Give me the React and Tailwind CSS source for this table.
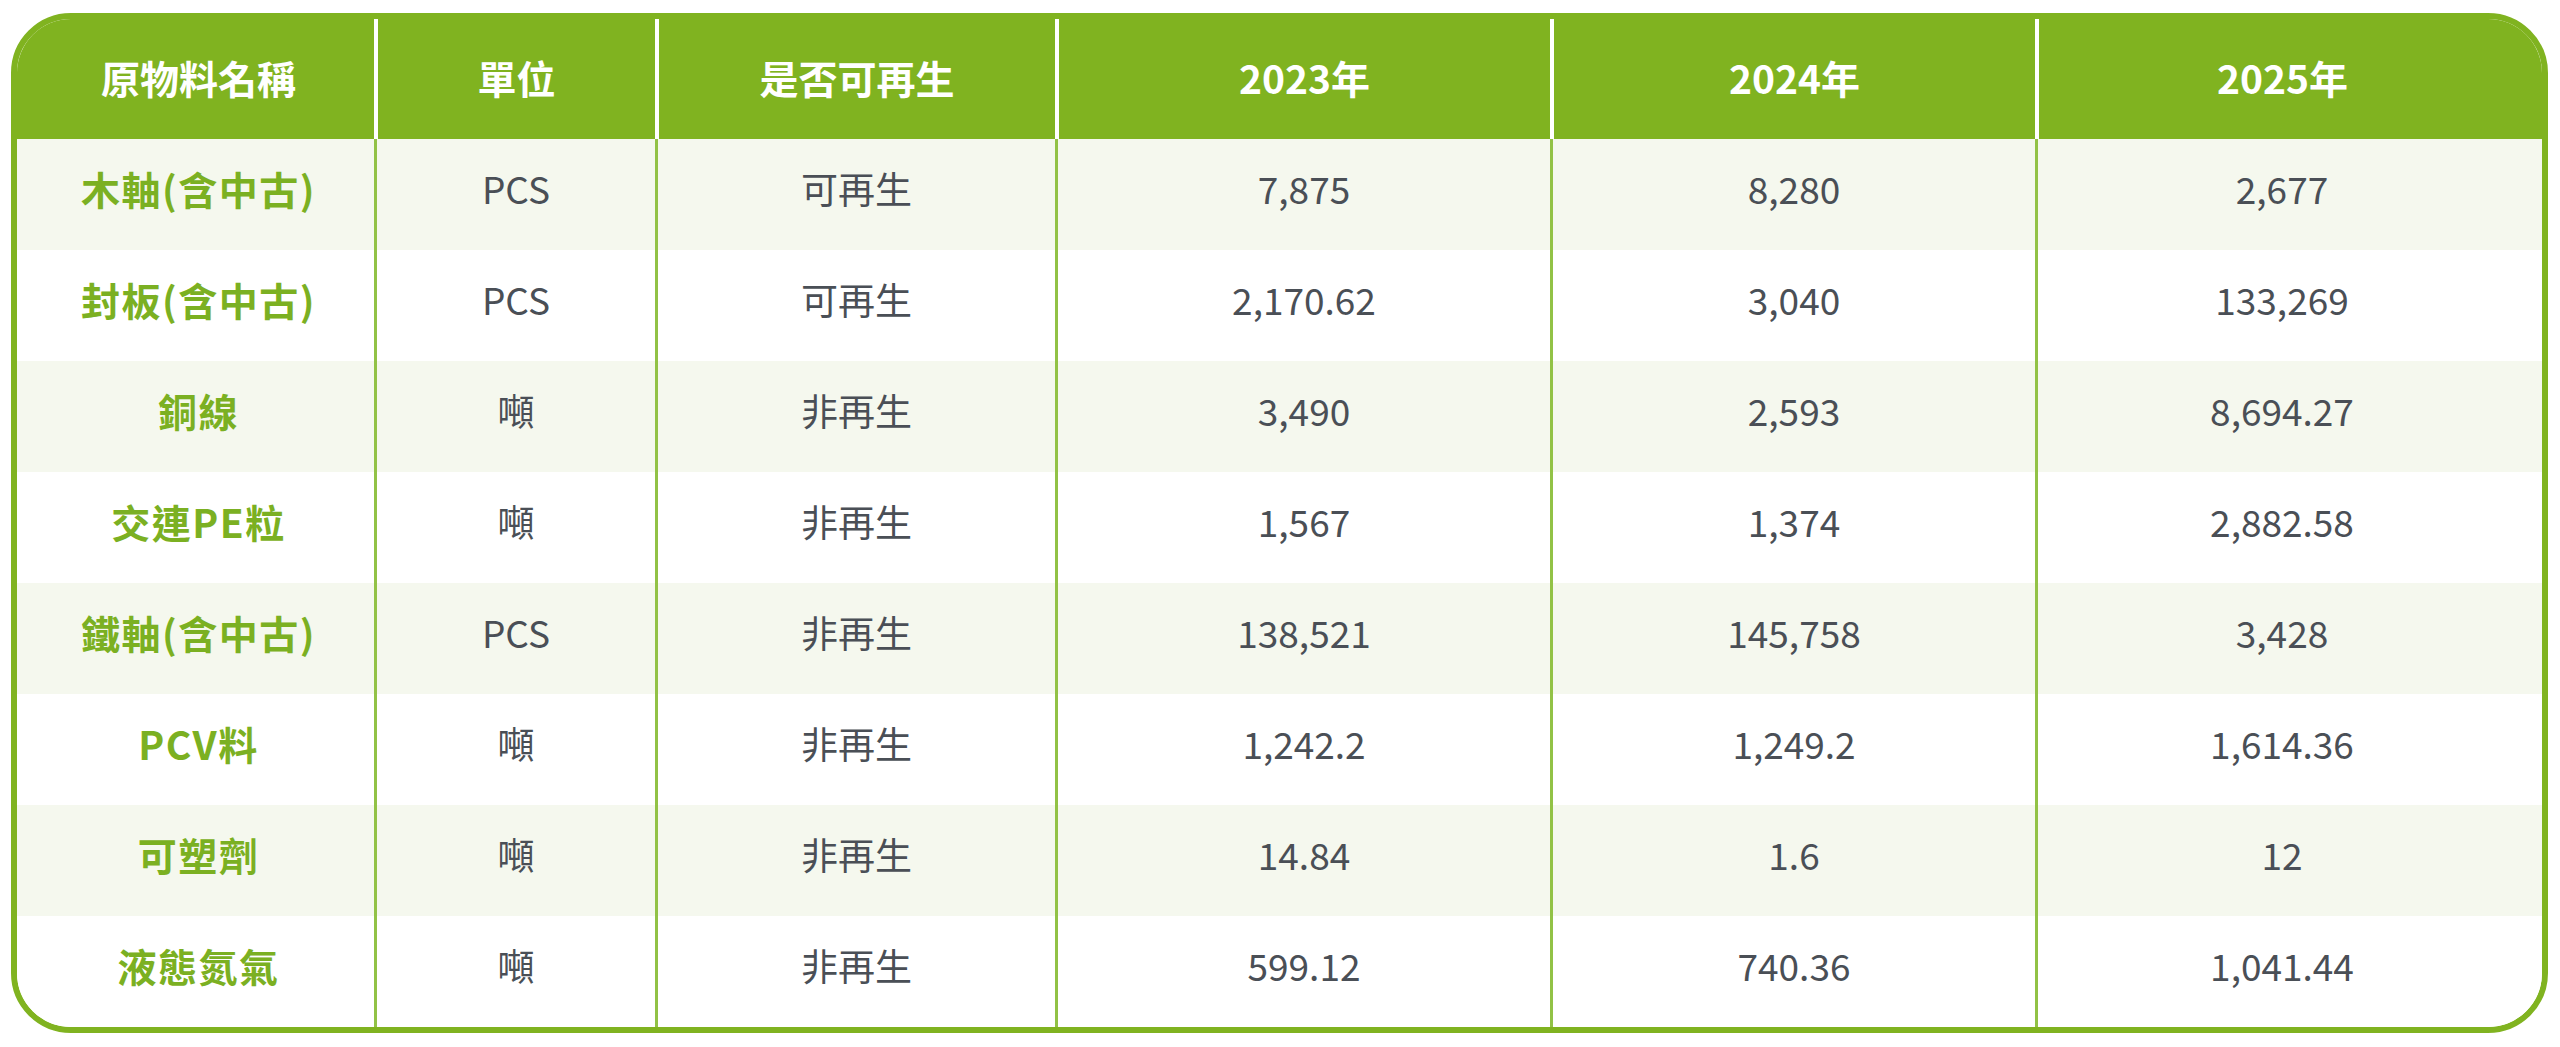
const headers = ["原物料名稱", "單位", "是否可再生", "2023年", "2024年", "2025年"];

const rows = [
  ["木軸(含中古)", "PCS", "可再生", "7,875", "8,280", "2,677"],
  ["封板(含中古)", "PCS", "可再生", "2,170.62", "3,040", "133,269"],
  ["銅線", "噸", "非再生", "3,490", "2,593", "8,694.27"],
  ["交連PE粒", "噸", "非再生", "1,567", "1,374", "2,882.58"],
  ["鐵軸(含中古)", "PCS", "非再生", "138,521", "145,758", "3,428"],
  ["PCV料", "噸", "非再生", "1,242.2", "1,249.2", "1,614.36"],
  ["可塑劑", "噸", "非再生", "14.84", "1.6", "12"],
  ["液態氮氣", "噸", "非再生", "599.12", "740.36", "1,041.44"],
];

const cols = "grid grid-cols-[357px_281px_400px_495px_485px_1fr]";

export default function App() {
  return (
    <div
      className="h-[1047px] w-[2560px] bg-white pl-[11px] pt-[13px]"
      style={{ fontFamily: '"Noto Sans CJK TC", "Noto Sans", sans-serif' }}
    >
      <div className="w-[2537px] h-[1020px] overflow-hidden rounded-[60px] border-[6px] border-[#80b320] bg-white">
        {/* header */}
        <div className={`${cols} h-[120px] bg-[#80b320]`}>
          {headers.map((h, i) => (
            <div
              key={h}
              className={`flex items-center justify-center pb-[3px] text-[39px] font-bold text-white ${
                i > 0 ? "border-l-4 border-white" : "pl-[6px]"
              } ${i === 5 ? "pr-[16px]" : ""}`}
            >
              {h}
            </div>
          ))}
        </div>

        {rows.map((r, ri) => (
          <div
            key={r[0]}
            className={`${cols} h-[111px] ${ri % 2 === 0 ? "bg-[#f5f8ee]" : "bg-white"}`}
          >
            {r.map((c, ci) => (
              <div
                key={ci}
                className={`flex items-center justify-center pb-[12px] ${
                  ci === 0
                    ? "pl-[6px] text-[39px] font-bold tracking-[1.5px] text-[#7bb022]"
                    : "border-l-[3px] border-[#92c246] text-[37px] font-normal text-[#4a4f56]"
                } ${ci === 5 ? "pr-[16px]" : ""}`}
              >
                {c}
              </div>
            ))}
          </div>
        ))}
      </div>
    </div>
  );
}
